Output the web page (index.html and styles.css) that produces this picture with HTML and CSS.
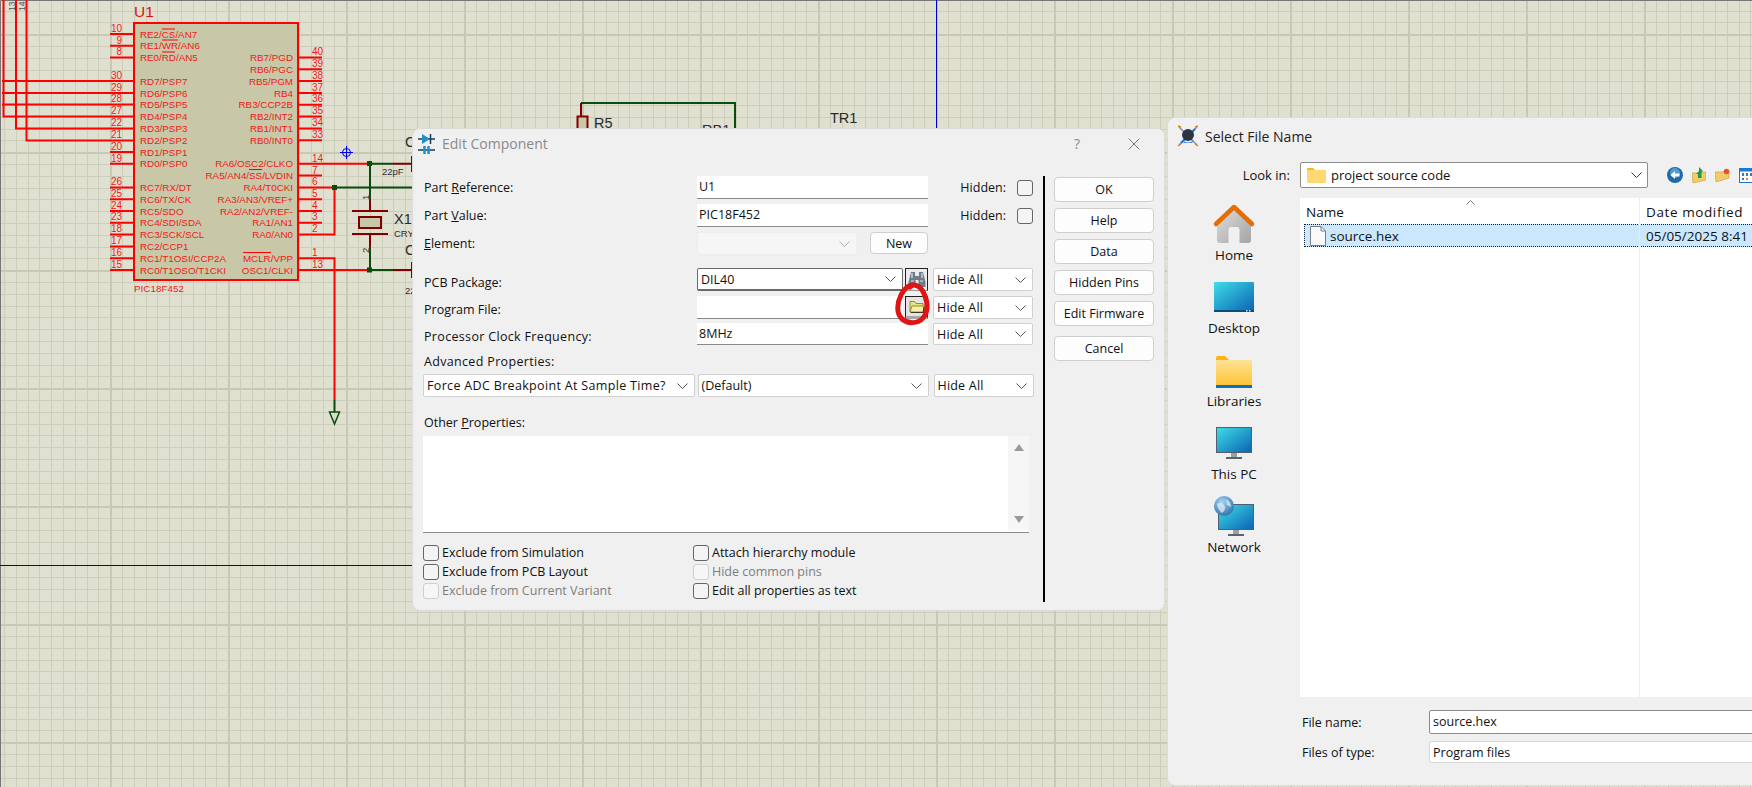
FILE: index.html
```html
<!DOCTYPE html>
<html lang="en">
<head>
<meta charset="utf-8">
<title>Edit Component</title>
<link rel="stylesheet" href="styles.css">
</head>
<body>
<svg class="schematic" width="1752" height="787" viewBox="0 0 1752 787">
  <defs>
    <pattern id="grid" x="110" y="34" width="118" height="118" patternUnits="userSpaceOnUse">
      <path class="minor" d="M12.500 0V118M24.500 0V118M36.500 0V118M47.500 0V118M59.500 0V118M71.500 0V118M83.500 0V118M95.500 0V118M106.500 0V118M0 12.500H118M0 24.500H118M0 36.500H118M0 47.500H118M0 59.500H118M0 71.500H118M0 83.500H118M0 95.500H118M0 106.500H118"/>
      <path class="major" d="M1 0V118M0 1H118"/>
    </pattern>
  </defs>
  <rect class="paper" width="1752" height="787"/>
  <rect width="1752" height="787" fill="url(#grid)"/>
  <path class="frame" d="M0.500 787V0.500H1752"/>
  <path class="origin" d="M936.500 0V130M0 565.500H420"/>

  <g class="wire-red">
    <path d="M3.500 0V116.500H134M16 0V128.500H134M26.500 0V140.500H134M2 81H134M2 93H134M2 104.500H134"/>
    <path d="M110 34H134M110 45.800H134M110 57.500H134M110 152H134M110 163.800H134M110 187.400H134M110 199.200H134M110 211H134M110 222.800H134M110 234.600H134M110 246.400H134M110 258.200H134M110 270H134"/>
    <path d="M298 57.500H322M298 69.300H322M298 81H322M298 93H322M298 104.800H322M298 116.600H322M298 128.400H322M298 140.200H322M298 175.600H322M298 199.200H322M298 211H322M298 222.800H322"/>
    <path d="M298 163.800H370M298 187.400H334.500M298 234.600H334.500V187.400M298 258.200H334.500V400M298 270H370"/>
  </g>
  <path class="wire-green" d="M370 163.800H393M334.500 187.400H420M370 163.800V200M370 247V270H393M581 103H735V130M334.500 400V412"/>
  <path class="wire-dark" d="M393 163.800H412M393 270H412M412 156V172M412 262V278M370 200V211M370 234V247M352 211H388M352 234H388M581 103V116"/>
  <rect class="part-body" x="359" y="217" width="22" height="11"/>
  <rect class="part-body" x="577.500" y="116.500" width="10" height="20"/>
  <path class="ground" d="M334.500 424L329.500 412H339.500Z"/>
  <g class="junction">
    <rect x="367" y="161" width="5" height="5"/>
    <rect x="332" y="185" width="5" height="5"/>
    <rect x="367" y="267.500" width="5" height="5"/>
  </g>
  <g class="marker">
    <circle cx="346.500" cy="152.500" r="4"/>
    <path d="M346.500 146V159M340 152.500H353"/>
  </g>

  <rect class="chip" x="134" y="23" width="164" height="257"/>
  <g class="overline">
    <path d="M162 29H175M162 40H178M162 52H175M249 169.500H262M243 252.500H271"/>
  </g>
  <text class="refdes" x="134" y="17">U1</text>
  <text class="chipname" x="134" y="292">PIC18F452</text>

  <g class="pin-label">
    <text x="140" y="38">RE2/CS/AN7</text>
    <text x="140" y="49">RE1/WR/AN6</text>
    <text x="140" y="61">RE0/RD/AN5</text>
    <text x="140" y="85">RD7/PSP7</text>
    <text x="140" y="97">RD6/PSP6</text>
    <text x="140" y="108">RD5/PSP5</text>
    <text x="140" y="120">RD4/PSP4</text>
    <text x="140" y="132">RD3/PSP3</text>
    <text x="140" y="144">RD2/PSP2</text>
    <text x="140" y="156">RD1/PSP1</text>
    <text x="140" y="167">RD0/PSP0</text>
    <text x="140" y="191">RC7/RX/DT</text>
    <text x="140" y="203">RC6/TX/CK</text>
    <text x="140" y="215">RC5/SDO</text>
    <text x="140" y="226">RC4/SDI/SDA</text>
    <text x="140" y="238">RC3/SCK/SCL</text>
    <text x="140" y="250">RC2/CCP1</text>
    <text x="140" y="262">RC1/T1OSI/CCP2A</text>
    <text x="140" y="274">RC0/T1OSO/T1CKI</text>
  </g>
  <g class="pin-label end">
    <text x="293" y="61">RB7/PGD</text>
    <text x="293" y="73">RB6/PGC</text>
    <text x="293" y="85">RB5/PGM</text>
    <text x="293" y="97">RB4</text>
    <text x="293" y="108">RB3/CCP2B</text>
    <text x="293" y="120">RB2/INT2</text>
    <text x="293" y="132">RB1/INT1</text>
    <text x="293" y="144">RB0/INT0</text>
    <text x="293" y="167">RA6/OSC2/CLKO</text>
    <text x="293" y="179">RA5/AN4/SS/LVDIN</text>
    <text x="293" y="191">RA4/T0CKI</text>
    <text x="293" y="203">RA3/AN3/VREF+</text>
    <text x="293" y="215">RA2/AN2/VREF-</text>
    <text x="293" y="226">RA1/AN1</text>
    <text x="293" y="238">RA0/AN0</text>
    <text x="293" y="262">MCLR/VPP</text>
    <text x="293" y="274">OSC1/CLKI</text>
  </g>
  <g class="pin-num end">
    <text x="122" y="32">10</text>
    <text x="122" y="44">9</text>
    <text x="122" y="55">8</text>
    <text x="122" y="79">30</text>
    <text x="122" y="91">29</text>
    <text x="122" y="102">28</text>
    <text x="122" y="114">27</text>
    <text x="122" y="126">22</text>
    <text x="122" y="138">21</text>
    <text x="122" y="150">20</text>
    <text x="122" y="162">19</text>
    <text x="122" y="185">26</text>
    <text x="122" y="197">25</text>
    <text x="122" y="209">24</text>
    <text x="122" y="220">23</text>
    <text x="122" y="232">18</text>
    <text x="122" y="244">17</text>
    <text x="122" y="256">16</text>
    <text x="122" y="268">15</text>
  </g>
  <g class="pin-num">
    <text x="312" y="55">40</text>
    <text x="312" y="67">39</text>
    <text x="312" y="79">38</text>
    <text x="312" y="91">37</text>
    <text x="312" y="102">36</text>
    <text x="312" y="114">35</text>
    <text x="312" y="126">34</text>
    <text x="312" y="138">33</text>
    <text x="312" y="162">14</text>
    <text x="312" y="174">7</text>
    <text x="312" y="185">6</text>
    <text x="312" y="197">5</text>
    <text x="312" y="209">4</text>
    <text x="312" y="220">3</text>
    <text x="312" y="232">2</text>
    <text x="312" y="256">1</text>
    <text x="312" y="268">13</text>
  </g>
  <g class="note">
    <text x="382" y="175">22pF</text>
    <text x="394" y="237">CRY</text>
    <text x="405" y="294">22</text>
    <text class="tiny" transform="translate(15,11) rotate(-90)">13</text>
    <text class="tiny" transform="translate(25,11) rotate(-90)">14</text>
    <text transform="translate(369,200) rotate(-90)">1</text>
    <text transform="translate(369,253) rotate(-90)">2</text>
  </g>
  <g class="label-big">
    <text x="394" y="224">X1</text>
    <text x="405" y="147">C</text>
    <text x="405" y="255">C</text>
    <text x="594" y="128">R5</text>
    <text x="702" y="135">RB1</text>
    <text x="830" y="123">TR1</text>
  </g>
</svg>

<section class="window edit">
  <header class="titlebar">
    <svg class="title-icon" width="18" height="22" viewBox="0 0 18 22">
      <path d="M0 6H17M0 17H17" stroke="#1f3a55" stroke-width="1.300"/>
      <path d="M4 1L12 6L4 11Z" fill="#1f8fd0"/>
      <path d="M12.500 1V11" stroke="#1f3a55" stroke-width="1.500"/>
      <path d="M6.500 13V21M10.500 13V21" stroke="#1f8fd0" stroke-width="2.500"/>
    </svg>
    <h1 class="title-text">Edit Component</h1>
    <span class="title-help">?</span>
    <svg class="title-close" width="12" height="12" viewBox="0 0 12 12"><path d="M0.500 0.500L11.500 11.500M11.500 0.500L0.500 11.500" stroke="#777" fill="none"/></svg>
  </header>
  <div class="edit-body">
    <div class="form">
      <div class="row">
        <label class="lbl">Part <u>R</u>eference:</label>
        <div class="field">U1</div>
        <div class="hidden-flag"><span>Hidden:</span><i class="check"></i></div>
      </div>
      <div class="row">
        <label class="lbl">Part <u>V</u>alue:</label>
        <div class="field">PIC18F452</div>
        <div class="hidden-flag"><span>Hidden:</span><i class="check"></i></div>
      </div>
      <div class="row">
        <label class="lbl"><u>E</u>lement:</label>
        <div class="value-pair">
          <div class="select disabled"><span></span><svg class="chev" width="11" height="6" viewBox="0 0 11 6"><path d="M0.500 0.500L5.500 5.500L10.500 0.500"/></svg></div>
          <button class="btn btn-new">New</button>
        </div>
      </div>
      <div class="row row-gap lowlabel">
        <label class="lbl">PCB Package:</label>
        <div class="value-pair tight">
          <div class="select focus"><span>DIL40</span><svg class="chev" width="11" height="6" viewBox="0 0 11 6"><path d="M0.500 0.500L5.500 5.500L10.500 0.500"/></svg></div>
          <button class="tool" aria-label="Search">
            <svg width="18" height="17" viewBox="0 0 18 17"><path d="M3 1H7V5H11V1H15L17.500 11V16H10.500V9H7.500V16H0.500V11Z" fill="#6e7b88"/><path d="M3 10H6M12 10H15M4 2V7M14 2V7" stroke="#dfe5ea" stroke-width="1.200"/></svg>
          </button>
        </div>
        <div class="select hide"><span>Hide All</span><svg class="chev" width="11" height="6" viewBox="0 0 11 6"><path d="M0.500 0.500L5.500 5.500L10.500 0.500"/></svg></div>
      </div>
      <div class="row lowlabel lowlabel-less">
        <label class="lbl">Program File:</label>
        <div class="value-pair tight">
          <div class="field grow"></div>
          <button class="tool tool-open" aria-label="Browse">
            <svg width="16" height="13" viewBox="0 0 16 13"><path d="M1 12V1.500H5.500L7 3.500H14V12Z" fill="#ece080" stroke="#7a7430" stroke-width="0.800"/><path d="M1 12L3 6H15.500L14 12Z" fill="#f8f0a4" stroke="#7a7430" stroke-width="0.800"/><path d="M14.800 7V13M2 12.800H15" stroke="#111"/></svg>
          </button>
          <svg class="scribble" width="44" height="50" viewBox="0 0 44 50"><path d="M20 4C14 4 11 8 8 14C4 22 3 32 9 38C15 43 25 43 30 37C35 31 35 23 32 15C30 9 27 5 22 4C20 3.500 18 5 17 6"/></svg>
        </div>
        <div class="select hide"><span>Hide All</span><svg class="chev" width="11" height="6" viewBox="0 0 11 6"><path d="M0.500 0.500L5.500 5.500L10.500 0.500"/></svg></div>
      </div>
      <div class="row row-tight lowlabel">
        <label class="lbl wide">Processor Clock Frequency:</label>
        <div class="field">8MHz</div>
        <div class="select hide"><span>Hide All</span><svg class="chev" width="11" height="6" viewBox="0 0 11 6"><path d="M0.500 0.500L5.500 5.500L10.500 0.500"/></svg></div>
      </div>
      <label class="lbl block lbl-adv wide">Advanced Properties:</label>
      <div class="row row-adv">
        <div class="select"><span class="wide">Force ADC Breakpoint At Sample Time?</span><svg class="chev" width="11" height="6" viewBox="0 0 11 6"><path d="M0.500 0.500L5.500 5.500L10.500 0.500"/></svg></div>
        <div class="select"><span>(Default)</span><svg class="chev" width="11" height="6" viewBox="0 0 11 6"><path d="M0.500 0.500L5.500 5.500L10.500 0.500"/></svg></div>
        <div class="select hide"><span>Hide All</span><svg class="chev" width="11" height="6" viewBox="0 0 11 6"><path d="M0.500 0.500L5.500 5.500L10.500 0.500"/></svg></div>
      </div>
      <label class="lbl block lbl-other">Other <u>P</u>roperties:</label>
      <div class="textarea">
        <div class="scrollbar"><span class="arrow up"></span><span class="arrow down"></span></div>
      </div>
      <div class="checks">
        <div class="check-row"><i class="check"></i><span>Exclude from Simulation</span></div>
        <div class="check-row"><i class="check"></i><span>Attach hierarchy module</span></div>
        <div class="check-row"><i class="check"></i><span>Exclude from PCB Layout</span></div>
        <div class="check-row off"><i class="check"></i><span>Hide common pins</span></div>
        <div class="check-row off"><i class="check"></i><span>Exclude from Current Variant</span></div>
        <div class="check-row"><i class="check"></i><span>Edit all properties as text</span></div>
      </div>
    </div>
    <div class="divider"></div>
    <div class="actions">
      <button class="btn">OK</button>
      <button class="btn">Help</button>
      <button class="btn">Data</button>
      <button class="btn">Hidden Pins</button>
      <button class="btn">Edit Firmware</button>
      <button class="btn btn-cancel">Cancel</button>
    </div>
  </div>
</section>

<section class="window files">
  <header class="titlebar files-title">
    <svg width="22" height="22" viewBox="0 0 22 22">
      <path d="M2 2L20 20M20 2L2 20" stroke="#8a8f98" stroke-width="1.500"/>
      <path d="M4 18L18 4" stroke="#2a6fd0" stroke-width="2"/>
      <circle cx="11" cy="10" r="6" fill="#2d3442"/>
      <path d="M5 15Q11 20 17 15L15 18H7Z" fill="#3b7fe0"/>
      <path d="M1 1L4 2M21 1L18 2M1 21L4 19M21 21L18 19" stroke="#d08a20" stroke-width="1.500"/>
    </svg>
    <h2 class="files-name">Select File Name</h2>
  </header>
  <div class="lookin">
    <span class="lookin-label">Look in:</span>
    <div class="lookin-combo">
      <svg width="19" height="15" viewBox="0 0 19 15"><path d="M0 1a1 1 0 0 1 1-1H6L8 2H0Z" fill="#f8b912"/><path d="M0 2H18a1 1 0 0 1 1 1V14a1 1 0 0 1-1 1H1a1 1 0 0 1-1-1Z" fill="#fdd874"/></svg>
      <span>project source code</span>
      <svg class="chev dark" width="11" height="6" viewBox="0 0 11 6"><path d="M0.500 0.500L5.500 5.500L10.500 0.500"/></svg>
    </div>
    <div class="toolbar">
      <svg width="16" height="16" viewBox="0 0 16 16"><circle cx="8" cy="8" r="8" fill="#1f6aa8"/><circle cx="8" cy="6" r="5" fill="#4f9ad8"/><path d="M3.500 8L8 4V6.500H12.500V9.500H8V12Z" fill="#fff"/></svg>
      <svg width="14" height="16" viewBox="0 0 14 16"><path d="M0 6H6L14 5V13L1 16Z" fill="#f3cc6a" stroke="#c69a30" stroke-width="0.600"/><path d="M7 0L11.500 4.500H9.500V11H6V7H4L7 4Z" fill="#1f9a4a"/></svg>
      <svg width="15" height="14" viewBox="0 0 15 14"><path d="M0 4H6L14 3V10L1 14Z" fill="#f3cc6a" stroke="#c69a30" stroke-width="0.600"/><circle cx="11.500" cy="3.500" r="2.800" fill="#e8542a"/></svg>
      <svg width="15" height="15" viewBox="0 0 15 15"><rect x="0.500" y="0.500" width="14" height="14" fill="#fff" stroke="#1f78d0"/><rect x="0.500" y="0.500" width="14" height="3" fill="#1f78d0"/><path d="M3 5H5V8H3ZM7 5H9V8H7ZM11 5H13V8H11ZM3 10H5V12H3Z" fill="#2f7fc0"/><path d="M7 10H9V12H7Z" fill="#e88030"/></svg>
    </div>
  </div>
  <div class="browser">
    <nav class="places">
      <div class="place">
        <svg class="place-icon" width="40" height="40" viewBox="0 0 40 40">
          <defs><linearGradient id="gHouse" x1="0" y1="0" x2="1" y2="1"><stop offset="0" stop-color="#dedede"/><stop offset="1" stop-color="#a4a4a4"/></linearGradient></defs>
          <path d="M3 19L20 4L37 19V36a3 3 0 0 1-3 3H6a3 3 0 0 1-3-3Z" fill="url(#gHouse)"/>
          <path d="M14.500 39V26a3 3 0 0 1 3-3h5a3 3 0 0 1 3 3V39Z" fill="#f0f0f0"/>
          <path d="M2 20L20 3L38 20" fill="none" stroke="#e66c04" stroke-width="4.500" stroke-linecap="round" stroke-linejoin="round"/>
        </svg>
        <span>Home</span>
      </div>
      <div class="place">
        <svg class="place-icon" width="40" height="40" viewBox="0 0 40 40">
          <defs><linearGradient id="gScreenA" x1="0" y1="0" x2="1" y2="1"><stop offset="0" stop-color="#3fdde8"/><stop offset="1" stop-color="#0a63b2"/></linearGradient></defs>
          <rect x="0" y="5" width="40" height="29" rx="1" fill="url(#gScreenA)"/>
          <rect x="0" y="33" width="40" height="2" fill="#0c4c78"/>
          <path d="M32 33h1.500v1.500H32ZM35 33h1.500v1.500H35Z" fill="#cfe8f5"/>
        </svg>
        <span>Desktop</span>
      </div>
      <div class="place">
        <svg class="place-icon" width="40" height="40" viewBox="0 0 40 40">
          <defs><linearGradient id="gFolder" x1="0" y1="0" x2="0" y2="1"><stop offset="0" stop-color="#ffe296"/><stop offset="1" stop-color="#fcc538"/></linearGradient></defs>
          <path d="M2 8a2 2 0 0 1 2-2H11L15 10H2Z" fill="#fbb614"/>
          <rect x="2" y="10" width="36" height="25" fill="url(#gFolder)"/>
          <rect x="2" y="35" width="36" height="3" fill="#0b70c4"/>
        </svg>
        <span>Libraries</span>
      </div>
      <div class="place">
        <svg class="place-icon" width="40" height="40" viewBox="0 0 40 40">
          <defs><linearGradient id="gScreenB" x1="0" y1="0" x2="1" y2="1"><stop offset="0" stop-color="#3fdde8"/><stop offset="1" stop-color="#0a63b2"/></linearGradient></defs>
          <rect x="2.500" y="4.500" width="35" height="25" fill="url(#gScreenB)" stroke="#50606c"/>
          <rect x="17" y="30" width="6" height="4" fill="#9aa0a6"/>
          <rect x="12" y="34" width="16" height="2" fill="#5c6268"/>
        </svg>
        <span>This PC</span>
      </div>
      <div class="place">
        <svg class="place-icon" width="40" height="40" viewBox="0 0 40 40">
          <defs>
            <linearGradient id="gScreenC" x1="0" y1="0" x2="1" y2="1"><stop offset="0" stop-color="#3fdde8"/><stop offset="1" stop-color="#0a63b2"/></linearGradient>
            <radialGradient id="gGlobe" cx="0.400" cy="0.300" r="0.800"><stop offset="0" stop-color="#a8d4f0"/><stop offset="1" stop-color="#1f6aa8"/></radialGradient>
          </defs>
          <rect x="4.500" y="8.500" width="35" height="25" fill="url(#gScreenC)" stroke="#50606c"/>
          <rect x="19" y="34" width="6" height="4" fill="#9aa0a6"/>
          <rect x="14" y="38" width="16" height="2" fill="#5c6268"/>
          <circle cx="10" cy="10" r="10" fill="url(#gGlobe)"/>
          <path d="M3 8Q7 5 10 9T8 17Q4 14 3 8ZM12 3Q17 6 17 11L13 9Z" fill="#e6f1f8" opacity="0.700"/>
        </svg>
        <span>Network</span>
      </div>
    </nav>
    <div class="listing">
      <div class="list-head">
        <span class="col-name">Name</span>
        <svg class="sort" width="9" height="5" viewBox="0 0 9 5"><path d="M0.500 4.500L4.500 0.500L8.500 4.500" fill="none" stroke="#777"/></svg>
        <span class="col-date date-head">Date modified</span>
      </div>
      <div class="list-row">
        <div class="col-name file-cell">
          <svg width="16" height="20" viewBox="0 0 16 20"><path d="M0.500 0.500H11L15.500 5V19.500H0.500Z" fill="#fafafa" stroke="#7c7c7c"/><path d="M11 0.500V5H15.500" fill="none" stroke="#7c7c7c"/></svg>
          <span>source.hex</span>
        </div>
        <span class="col-date">05/05/2025 8:41</span>
      </div>
    </div>
  </div>
  <div class="file-foot">
    <div class="foot-row"><span class="foot-label">File name:</span><div class="foot-input">source.hex</div></div>
    <div class="foot-row"><span class="foot-label">Files of type:</span><div class="foot-input type">Program files</div></div>
  </div>
</section>
</body>
</html>
```
FILE: styles.css
```css
* { box-sizing: border-box; }
html, body { margin: 0; padding: 0; width: 1752px; height: 787px; overflow: hidden; background: #dfdfcf; }
body { position: relative; font-family: "Open Sans", "Noto Sans", sans-serif; font-size: 12.5px; color: #111; }
button { font: inherit; color: inherit; margin: 0; padding: 0; }
h1, h2 { margin: 0; font-weight: 400; }

/* schematic canvas */
.schematic { position: absolute; left: 0; top: 0; display: block; font-family: "Liberation Sans", sans-serif; }
.paper { fill: #e0e0d0; }
.minor { stroke: #cdcdbc; stroke-width: 1; fill: none; shape-rendering: crispEdges; }
.major { stroke: #c8c8b6; stroke-width: 2; fill: none; shape-rendering: crispEdges; }
.frame { stroke: #777; fill: none; }
.origin { stroke: #0000c0; fill: none; }
.wire-red path { stroke: #f00; stroke-width: 2; fill: none; }
.wire-green { stroke: #0a4d0a; stroke-width: 2; fill: none; }
.wire-dark { stroke: #800000; stroke-width: 2; fill: none; }
.part-body { fill: #c8c8a8; stroke: #800000; stroke-width: 2; }
.ground { fill: none; stroke: #0a4d0a; stroke-width: 1.500; }
.junction rect { fill: #0a4d0a; }
.marker { fill: none; stroke: #0000e0; }
.chip { fill: #c8c8a8; stroke: #f00; stroke-width: 2; }
.overline path { stroke: #f00; fill: none; }
.refdes { font-size: 15.500px; fill: #e01010; }
.chipname { font-size: 9.900px; fill: #f02020; }
.pin-label text { font-size: 9.800px; fill: #f01818; }
.pin-num text { font-size: 10px; fill: #f01818; }
.end text { text-anchor: end; }
.note text { font-size: 9.500px; fill: #2c2c2c; }
.note .tiny { font-size: 8.500px; fill: #555; }
.label-big text { font-size: 14.500px; fill: #2a2a2a; }

/* windows */
.window { position: absolute; background: #f0f0f0; border: 1px solid #dcdcd8; }
.titlebar { display: flex; align-items: center; }

.edit { left: 412px; top: 128px; width: 753px; height: 483px; border-radius: 8px; }
.edit .titlebar { height: 29px; padding: 0 0 0 5px; }
.title-icon { flex: none; }
.title-text { margin-left: 6px; font-size: 14px; color: #8a8a8a; flex: 1; }
.title-help { width: 20px; text-align: center; color: #8a8a8a; font-size: 14px; }
.title-close { margin: 0 24px 0 41px; }
.edit-body { display: flex; padding: 18px 0 0 10px; }
.form { width: 610px; display: flex; flex-direction: column; }

.row { display: grid; grid-template-columns: 269px 231px 100px; column-gap: 5px; height: 23px; align-items: center; margin-bottom: 5px; }
.row-gap { margin-top: 8px; }
.row-tight { margin-top: -1px; height: 22px; }
.lowlabel .lbl { padding-top: 5px; }
.lowlabel-less .lbl { padding-top: 3px; }
.lbl { display: block; white-space: nowrap; padding-left: 1px; }
.wide { letter-spacing: 0.330px; }
.block { height: 18px; line-height: 18px; }
.lbl-adv { margin-top: 3px; margin-bottom: 3px; }
.lbl-other { margin-top: 12px; margin-bottom: 4px; }

.field { height: 100%; background: #fff; border-bottom: 1.500px solid #8a8a8a; padding: 0 2px; line-height: 21px; }
.grow { flex: 1; min-width: 0; }
.value-pair { display: flex; height: 100%; justify-content: space-between; position: relative; }
.value-pair.tight { gap: 2px; justify-content: flex-start; }
.select { display: flex; align-items: center; justify-content: space-between; height: 100%; background: #fff; border: 1px solid #d0d0d0; border-radius: 2px; padding: 0 6px 0 3px; white-space: nowrap; min-width: 0; flex: 1; }
.select.focus { border-color: #6a6a6a; border-bottom-width: 2px; }
.select.disabled { background: #f6f6f7; border-color: #eeeeee; flex: none; width: 160px; }
.select.disabled .chev path { stroke: #b0b0b0; }
.hide span { letter-spacing: 0.200px; }
.chev { flex: none; }
.chev path { stroke: #555; fill: none; }
.chev.dark path { stroke: #333; }

.btn { background: #fdfdfd; border: 1px solid #cfcfcf; border-radius: 4px; height: 25px; width: 100px; text-align: center; }
.btn-new { width: 58px; height: 22px; }
.tool { flex: none; width: 23px; height: 100%; background: #ececec; border: 1px solid #222; border-bottom-color: #999; display: flex; align-items: center; justify-content: center; }
.tool-open { background: #e4e4e4; border-bottom: 3px solid #a8a8a8; padding: 0; }
.scribble { position: absolute; left: 196px; top: -15px; overflow: visible; pointer-events: none; }
.scribble path { fill: none; stroke: #e01414; stroke-width: 5; stroke-linecap: round; }

.hidden-flag { display: flex; justify-content: flex-end; align-items: center; gap: 11px; }
.check { display: block; flex: none; width: 16px; height: 16px; border: 1.500px solid #666; border-radius: 3px; background: #f4f4f4; }

.row-adv { grid-template-columns: 272px 231px 100px; column-gap: 2.500px; }
.row-adv .hide { margin-left: 2.500px; width: 100px; }

.textarea { position: relative; width: 606px; height: 97px; background: #fff; border-bottom: 1.500px solid #8a8a8a; display: flex; justify-content: flex-end; }
.scrollbar { width: 21px; background: #f6f6f6; display: flex; flex-direction: column; justify-content: space-between; align-items: center; padding: 8px 0 7px; margin-bottom: 2px; }
.arrow { display: block; width: 0; height: 0; border-left: 5px solid transparent; border-right: 5px solid transparent; }
.arrow.up { border-bottom: 7px solid #9a9a9a; }
.arrow.down { border-top: 7px solid #9a9a9a; }

.checks { display: grid; grid-template-columns: 270px 300px; grid-auto-rows: 19px; margin-top: 10px; }
.check-row { display: flex; align-items: center; gap: 3px; white-space: nowrap; }
.check-row.off span { color: #7e7e7e; }
.check-row.off .check { border-color: #cfcfcf; background: #f6f6f6; }

.divider { width: 2px; height: 426px; background: #000; margin-left: 10px; }
.actions { display: flex; flex-direction: column; gap: 6px; margin-left: 9px; padding-top: 1px; }
.btn-cancel { margin-top: 4px; }

/* file dialog */
.files { left: 1167px; top: 117px; width: 760px; height: 669px; border-radius: 8px; }
.files-title { height: 36px; padding-left: 9px; gap: 6px; }
.files-name { font-size: 14px; color: #222; }
.lookin { display: flex; align-items: center; height: 26px; margin-top: 8px; }
.lookin-label { width: 122px; text-align: right; margin-right: 10px; font-size: 13px; }
.lookin-combo { width: 348px; height: 26px; background: #fff; border: 1px solid #8c8c8c; border-radius: 2px; display: flex; align-items: center; gap: 5px; padding: 0 5px 0 6px; font-size: 13px; }
.lookin-combo .chev { margin-left: auto; }
.toolbar { display: flex; align-items: center; gap: 9px; margin-left: 19px; }
.browser { display: flex; margin-top: 10px; height: 499px; }
.places { width: 132px; display: flex; flex-direction: column; align-items: center; padding-top: 6px; }
.place { height: 73px; display: flex; flex-direction: column; align-items: center; gap: 2px; font-size: 13.500px; }
.place span { line-height: 18px; }
.place-icon { display: block; overflow: visible; }
.listing { flex: 1; background: #fff; position: relative; font-size: 13.500px; }
.listing::after { content: ""; position: absolute; left: 339px; top: 0; bottom: 0; width: 1px; background: #e8eef4; }
.list-head { position: relative; display: flex; height: 26px; align-items: center; padding-top: 2px; }
.sort { position: absolute; left: 166px; top: 2px; }
.col-name { width: 346px; padding-left: 6px; flex: none; }
.col-date { white-space: nowrap; }
.date-head { letter-spacing: 0.600px; }
.list-row { display: flex; align-items: center; height: 23px; margin-left: 4px; background: #cce8ff; border: 1px dotted #123; }
.list-row .col-name { width: 341px; padding-left: 5px; }
.file-cell { display: flex; align-items: center; gap: 4px; }
.file-foot { padding-top: 13px; display: flex; flex-direction: column; gap: 6px; }
.foot-row { display: flex; align-items: center; height: 24px; }
.foot-label { width: 127px; padding-left: 134px; box-sizing: content-box; font-size: 12.500px; white-space: nowrap; }
.foot-input { flex: 1; height: 24px; background: #fff; border: 1px solid #8c8c8c; border-radius: 2px; padding-left: 3px; line-height: 21px; font-size: 12.500px; }
.foot-input.type { height: 22px; border: 1px solid #d8d8d8; }
```
